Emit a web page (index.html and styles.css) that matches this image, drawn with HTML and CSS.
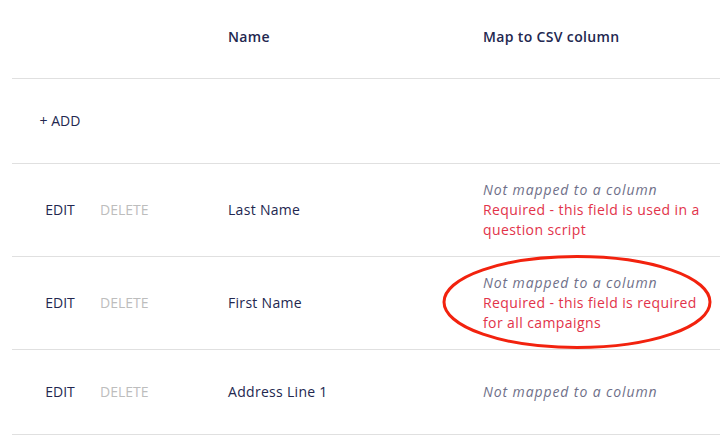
FILE: index.html
```html
<!DOCTYPE html>
<html>
<head>
<meta charset="utf-8">
<link rel="stylesheet" href="styles.css">
</head>
<body>
<div class="wrap">
<table class="fields">
  <colgroup>
    <col class="c-actions">
    <col class="c-name">
    <col class="c-map">
  </colgroup>
  <thead>
    <tr>
      <th></th>
      <th>Name</th>
      <th>Map to CSV column</th>
    </tr>
  </thead>
  <tbody>
    <tr class="row-add">
      <td><span class="btn">+ ADD</span></td>
      <td></td>
      <td></td>
    </tr>
    <tr>
      <td><span class="btn">EDIT</span><span class="btn disabled">DELETE</span></td>
      <td class="name">Last Name</td>
      <td>
        <div class="unmapped">Not mapped to a column</div>
        <div class="required">Required - this field is used in a question script</div>
      </td>
    </tr>
    <tr>
      <td><span class="btn">EDIT</span><span class="btn disabled">DELETE</span></td>
      <td class="name">First Name</td>
      <td>
        <div class="circled">
          <div class="unmapped">Not mapped to a column</div>
          <div class="required">Required - this field is required for all campaigns</div>
          <svg class="ellipse" width="270" height="96" viewBox="0 0 270 96"><ellipse cx="135" cy="48" rx="133" ry="45.5" fill="none" stroke="#f2220e" stroke-width="3"/></svg>
        </div>
      </td>
    </tr>
    <tr>
      <td><span class="btn">EDIT</span><span class="btn disabled">DELETE</span></td>
      <td class="name">Address Line 1</td>
      <td><div class="unmapped">Not mapped to a column</div></td>
    </tr>
  </tbody>
</table>
</div>
</body>
</html>
```

FILE: styles.css
```css
* { box-sizing: border-box; }
html, body { margin: 0; padding: 0; background: #fff; }
body {
  font-family: "Open Sans", "Liberation Sans", sans-serif;
  font-size: 14px;
  color: #23274f;
}
.wrap { padding: 0 7px 0 12px; }
.fields {
  width: 708px;
  border-collapse: collapse;
  table-layout: fixed;
}
.c-actions { width: 200px; }
.c-name { width: 255px; }
.c-map { width: 253px; }
th {
  height: 78px;
  text-align: left;
  font-weight: 600;
  letter-spacing: 0.35px;
  padding: 0 16px 4px;
  border-bottom: 1px solid #e0e0e0;
  vertical-align: middle;
}
td {
  height: 85px;
  padding: 16px;
  line-height: 20px;
  border-bottom: 1px solid #e0e0e0;
  vertical-align: middle;
}
td:first-child { padding-left: 16px; padding-right: 0; white-space: nowrap; }
.name { letter-spacing: 0.3px; }
.btn {
  display: inline-block;
  min-width: 64px;
  text-align: center;
  padding: 6px 8px;
  line-height: 20px;
}
.btn.disabled { color: #bdbdbd; }
.unmapped { font-style: italic; color: #6f7089; letter-spacing: 0.9px; }
.required { color: #e2334a; letter-spacing: 0.4px; }
.circled { position: relative; }
.ellipse {
  position: absolute;
  left: -41px;
  top: -19px;
  pointer-events: none;
}
```
